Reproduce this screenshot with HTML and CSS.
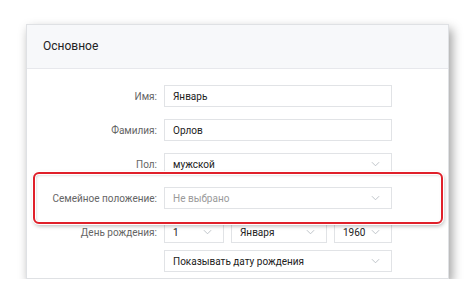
FILE: index.html
```html
<!DOCTYPE html>
<html lang="ru">
<head>
  <meta charset="UTF-8">
  <title>Основное</title>
  <link rel="stylesheet" href="styles.css">
</head>
<body>

  <div class="card">
    <div class="card-header">Основное</div>
    <div class="card-body">
      <div class="row">
        <div class="label">Имя:</div>
        <div class="field"><span>Январь</span></div>
      </div>
      <div class="row">
        <div class="label">Фамилия:</div>
        <div class="field"><span>Орлов</span></div>
      </div>
      <div class="row">
        <div class="label">Пол:</div>
        <div class="field select"><span>мужской</span><svg class="chev" viewBox="0 0 10 6"><path d="M1 1l4 4 4-4"/></svg></div>
      </div>
      <div class="row">
        <div class="label">Семейное положение:</div>
        <div class="field select"><span class="placeholder">Не выбрано</span><svg class="chev" viewBox="0 0 10 6"><path d="M1 1l4 4 4-4"/></svg></div>
      </div>
      <div class="row">
        <div class="label">День рождения:</div>
        <div class="date">
          <div class="field select day"><span>1</span><svg class="chev" viewBox="0 0 10 6"><path d="M1 1l4 4 4-4"/></svg></div>
          <div class="field select month"><span>Января</span><svg class="chev" viewBox="0 0 10 6"><path d="M1 1l4 4 4-4"/></svg></div>
          <div class="field select year"><span>1960</span><svg class="chev" viewBox="0 0 10 6"><path d="M1 1l4 4 4-4"/></svg></div>
        </div>
      </div>
      <div class="row row-tight">
        <div class="label"></div>
        <div class="field select"><span>Показывать дату рождения</span><svg class="chev" viewBox="0 0 10 6"><path d="M1 1l4 4 4-4"/></svg></div>
      </div>
    </div>
    <div class="highlight"></div>
  </div>

</body>
</html>
```

FILE: styles.css
```css
body {
  margin: 0;
  padding: 0;
  background-color: #fff;
  font-family: Roboto, "Liberation Sans", Arial, sans-serif;
  font-size: 10px;
  color: #222;
}
.card {
  position: relative;
  box-sizing: border-box;
  width: 423px;
  height: 255px;
  margin: 24px 0 0 26px;
  background-color: #fff;
  border: 1px solid #dfe1e4;
  box-shadow: 3px 5px 10px rgba(0,0,0,0.38);
}
.card-header {
  box-sizing: border-box;
  height: 44px;
  padding: 14px 0 0 16px;
  background-color: #f7f8fa;
  border-bottom: 1px solid #e7e8ec;
  font-size: 12px;
  color: #222;
}
.card-body {
  padding-top: 16px;
}
.row {
  display: flex;
  align-items: center;
  margin-bottom: 12px;
}
.row-tight {
  margin-top: -5px;
}
.label {
  width: 130px;
  margin-right: 7px;
  text-align: right;
  color: #656565;
}
.field {
  box-sizing: border-box;
  display: flex;
  align-items: center;
  width: 228px;
  height: 22px;
  padding: 0 8px;
  border: 1px solid #e1e3e6;
  background-color: #fff;
}
.field span {
  flex: 1;
}
.placeholder {
  color: #9a9a9a;
}
.chev {
  width: 9px;
  height: 6px;
  margin-right: 3px;
  fill: none;
  stroke: #b8bdc3;
  stroke-width: 1;
}
.date {
  display: flex;
  gap: 7px;
}
.day {
  width: 60px;
}
.month {
  width: 96px;
}
.year {
  width: 58px;
}
.highlight {
  position: absolute;
  left: 6px;
  top: 147px;
  width: 406px;
  height: 48px;
  border: 2px solid #e0202a;
  border-radius: 6px;
  box-shadow: 0 0 0 1px #fff, 1px 2px 4px rgba(0,0,0,0.3), inset 0 0 0 1px #fff, inset 1px 1px 3px rgba(0,0,0,0.22);
}
```
